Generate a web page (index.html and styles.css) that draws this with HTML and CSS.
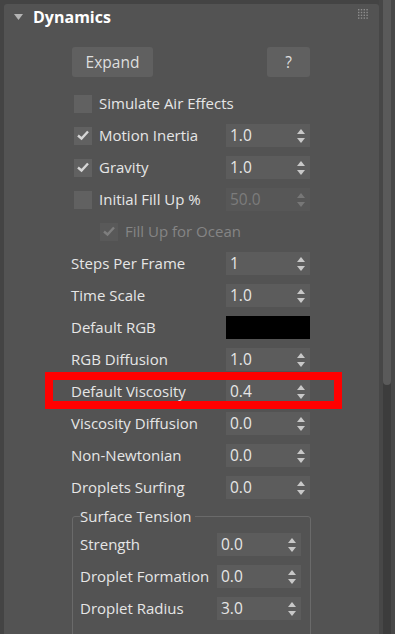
FILE: index.html
```html
<!DOCTYPE html>
<html lang="en">
<head>
  <meta charset="UTF-8" />
  <meta name="viewport" content="width=device-width, initial-scale=1.0" />
  <title>Dynamics</title>
  <link rel="stylesheet" href="styles.css">
</head>
<body>
  <div class="app">
    <div class="panel">
      <div class="rollout-head">
        <svg class="twisty" width="9" height="6" viewBox="0 0 9 6"><polygon points="0,0 9,0 4.5,6" /></svg>
        <span class="title">Dynamics</span>
        <svg class="grip" width="10" height="10" viewBox="0 0 10 10">
          <g>
            <rect x="0" y="0" width="1.4" height="1.4" /><rect x="2.8" y="0" width="1.4" height="1.4" /><rect x="5.6" y="0" width="1.4" height="1.4" /><rect x="8.4" y="0" width="1.4" height="1.4" />
            <rect x="0" y="2.8" width="1.4" height="1.4" /><rect x="2.8" y="2.8" width="1.4" height="1.4" /><rect x="5.6" y="2.8" width="1.4" height="1.4" /><rect x="8.4" y="2.8" width="1.4" height="1.4" />
            <rect x="0" y="5.6" width="1.4" height="1.4" /><rect x="2.8" y="5.6" width="1.4" height="1.4" /><rect x="5.6" y="5.6" width="1.4" height="1.4" /><rect x="8.4" y="5.6" width="1.4" height="1.4" />
            <rect x="0" y="8.4" width="1.4" height="1.4" /><rect x="2.8" y="8.4" width="1.4" height="1.4" /><rect x="5.6" y="8.4" width="1.4" height="1.4" /><rect x="8.4" y="8.4" width="1.4" height="1.4" />
          </g>
        </svg>
      </div>

      <div class="rollout-body">
        <div class="btn-row">
          <span class="btn btn-expand">Expand</span>
          <span class="btn btn-help">?</span>
        </div>

        <div class="rows">
          <div class="row">
            <span class="check"><span class="box"></span>Simulate Air Effects</span>
          </div>
          <div class="row">
            <span class="check"><span class="box on"><svg viewBox="0 0 18 18"><path d="M4 8.5 L7.5 11.5 L14 4.5" /></svg></span>Motion Inertia</span>
            <span class="spin"><span class="val">1.0</span><svg class="arrows" viewBox="0 0 8 14"><polygon points="4,0 8,5 0,5" /><polygon points="0,9 8,9 4,14" /></svg></span>
          </div>
          <div class="row">
            <span class="check"><span class="box on"><svg viewBox="0 0 18 18"><path d="M4 8.5 L7.5 11.5 L14 4.5" /></svg></span>Gravity</span>
            <span class="spin"><span class="val">1.0</span><svg class="arrows" viewBox="0 0 8 14"><polygon points="4,0 8,5 0,5" /><polygon points="0,9 8,9 4,14" /></svg></span>
          </div>
          <div class="row">
            <span class="check"><span class="box"></span>Initial Fill Up %</span>
            <span class="spin disabled"><span class="val">50.0</span><svg class="arrows" viewBox="0 0 8 14"><polygon points="4,0 8,5 0,5" /><polygon points="0,9 8,9 4,14" /></svg></span>
          </div>
          <div class="row">
            <span class="check sub disabled"><span class="box on"><svg viewBox="0 0 18 18"><path d="M4 8.5 L7.5 11.5 L14 4.5" /></svg></span>Fill Up for Ocean</span>
          </div>
          <div class="row">
            <span class="label">Steps Per Frame</span>
            <span class="spin"><span class="val">1</span><svg class="arrows" viewBox="0 0 8 14"><polygon points="4,0 8,5 0,5" /><polygon points="0,9 8,9 4,14" /></svg></span>
          </div>
          <div class="row">
            <span class="label">Time Scale</span>
            <span class="spin"><span class="val">1.0</span><svg class="arrows" viewBox="0 0 8 14"><polygon points="4,0 8,5 0,5" /><polygon points="0,9 8,9 4,14" /></svg></span>
          </div>
          <div class="row">
            <span class="label">Default RGB</span>
            <span class="swatch"></span>
          </div>
          <div class="row">
            <span class="label">RGB Diffusion</span>
            <span class="spin"><span class="val">1.0</span><svg class="arrows" viewBox="0 0 8 14"><polygon points="4,0 8,5 0,5" /><polygon points="0,9 8,9 4,14" /></svg></span>
          </div>
          <div class="row">
            <span class="label">Default Viscosity</span>
            <span class="spin"><span class="val">0.4</span><svg class="arrows" viewBox="0 0 8 14"><polygon points="4,0 8,5 0,5" /><polygon points="0,9 8,9 4,14" /></svg></span>
          </div>
          <div class="row">
            <span class="label">Viscosity Diffusion</span>
            <span class="spin"><span class="val">0.0</span><svg class="arrows" viewBox="0 0 8 14"><polygon points="4,0 8,5 0,5" /><polygon points="0,9 8,9 4,14" /></svg></span>
          </div>
          <div class="row">
            <span class="label">Non-Newtonian</span>
            <span class="spin"><span class="val">0.0</span><svg class="arrows" viewBox="0 0 8 14"><polygon points="4,0 8,5 0,5" /><polygon points="0,9 8,9 4,14" /></svg></span>
          </div>
          <div class="row">
            <span class="label">Droplets Surfing</span>
            <span class="spin"><span class="val">0.0</span><svg class="arrows" viewBox="0 0 8 14"><polygon points="4,0 8,5 0,5" /><polygon points="0,9 8,9 4,14" /></svg></span>
          </div>
        </div>

        <fieldset class="group">
          <legend>Surface Tension</legend>
          <div class="rows">
            <div class="row group-row">
              <span class="label">Strength</span>
              <span class="spin"><span class="val">0.0</span><svg class="arrows" viewBox="0 0 8 14"><polygon points="4,0 8,5 0,5" /><polygon points="0,9 8,9 4,14" /></svg></span>
            </div>
            <div class="row group-row">
              <span class="label">Droplet Formation</span>
              <span class="spin"><span class="val">0.0</span><svg class="arrows" viewBox="0 0 8 14"><polygon points="4,0 8,5 0,5" /><polygon points="0,9 8,9 4,14" /></svg></span>
            </div>
            <div class="row group-row">
              <span class="label">Droplet Radius</span>
              <span class="spin"><span class="val">3.0</span><svg class="arrows" viewBox="0 0 8 14"><polygon points="4,0 8,5 0,5" /><polygon points="0,9 8,9 4,14" /></svg></span>
            </div>
          </div>
        </fieldset>
      </div>

      <!-- annotation box drawn over the viscosity row -->
      <div class="highlight"></div>
    </div>

    <div class="scroll">
      <div class="gutter"></div>
      <div class="track"><div class="thumb"></div></div>
      <div class="edge"></div>
    </div>
  </div>
</body>
</html>
```

FILE: styles.css
```css
:root {
  --bg: #444444;
  --panel: #535353;
  --field: #5c5c5c;
  --text: #e6e6e6;
  --text-off: #858585;
}

body {
  margin: 0;
  padding: 0;
  background-color: var(--bg);
  color: var(--text);
  font-family: 'Open Sans', 'Noto Sans', sans-serif;
  font-size: 15px;
}

.app {
  display: flex;
  align-items: flex-start;
  height: 634px;
  overflow: hidden;
}

.panel {
  position: relative;
  width: 375px;
  height: 630px;
  margin: 4px 0 0 4px;
  background-color: var(--panel);
  border-radius: 3px 3px 0 0;
  overflow: hidden;
}

.rollout-head {
  display: flex;
  align-items: center;
  height: 26px;
  padding: 0 11px 0 10px;
}

.twisty {
  fill: #b4b4b4;
  margin-right: 10px;
}

.title {
  flex: 1;
  font-size: 16px;
  font-weight: bold;
  line-height: 26px;
  color: #ffffff;
}

.grip {
  fill: #8e8e8e;
  margin-top: -6px;
}

.rollout-body {
  padding: 17px 0 0 67px;
}

.btn-row {
  display: flex;
  justify-content: space-between;
  width: 238px;
  margin-left: 1px;
}

.btn {
  display: block;
  height: 30px;
  line-height: 30px;
  text-align: center;
  background-color: #606060;
  border-radius: 3px;
  color: #dedede;
  font-size: 15.5px;
}

.btn-expand { width: 81px; }
.btn-help { width: 43px; }

.rows {
  display: flex;
  flex-direction: column;
  gap: 9px;
}

.rollout-body > .rows {
  margin-top: 15px;
}

.row {
  display: grid;
  grid-template-columns: 155px 84px;
  align-items: center;
  height: 23px;
  line-height: 23px;
}

.check {
  display: flex;
  align-items: center;
  padding-left: 3px;
  white-space: nowrap;
}

.check.sub {
  padding-left: 29px;
}

.box {
  display: block;
  flex-shrink: 0;
  width: 18px;
  height: 18px;
  margin-right: 7px;
  background-color: #616161;
}

.box svg {
  display: block;
  width: 18px;
  height: 18px;
  fill: none;
  stroke: #d6d6d6;
  stroke-width: 2.4;
}

.check.disabled {
  color: var(--text-off);
}

.check.disabled .box {
  background-color: #595959;
}

.check.disabled .box svg {
  stroke: #7e7e7e;
}

.label {
  white-space: nowrap;
}

.spin {
  display: flex;
  align-items: center;
  justify-content: space-between;
  height: 23px;
  padding: 0 5px 0 4px;
  box-sizing: border-box;
  background-color: var(--field);
}

.spin .val {
  font-size: 15.5px;
}

.arrows {
  width: 8px;
  height: 14px;
  fill: #c8c8c8;
}

.spin.disabled {
  background-color: #575757;
  color: #7c7c7c;
}

.spin.disabled .arrows {
  fill: #777777;
}

.swatch {
  display: block;
  height: 23px;
  background-color: #000000;
}

.group {
  width: 239px;
  box-sizing: border-box;
  margin: 6px 0 0 1px;
  padding: 6px 9px 10px 7px;
  border: 1px solid #6a6a6a;
  border-radius: 3px;
  min-height: 140px;
}

.group legend {
  padding: 0 4px 0 0;
  line-height: 22px;
}

.group-row {
  grid-template-columns: 137px 84px;
}

.highlight {
  position: absolute;
  left: 41px;
  top: 368px;
  width: 297px;
  height: 37px;
  box-sizing: border-box;
  border: 8px solid #ff0000;
}

.scroll {
  display: flex;
  width: 16px;
  height: 634px;
}

.gutter {
  width: 4px;
  background-color: #474747;
}

.track {
  width: 8px;
  background-color: #3c3c3c;
}

.thumb {
  height: 385px;
  background-color: #5a5a5a;
  border-radius: 0 0 4px 4px;
}

.edge {
  width: 4px;
  background-color: #484848;
}
```
